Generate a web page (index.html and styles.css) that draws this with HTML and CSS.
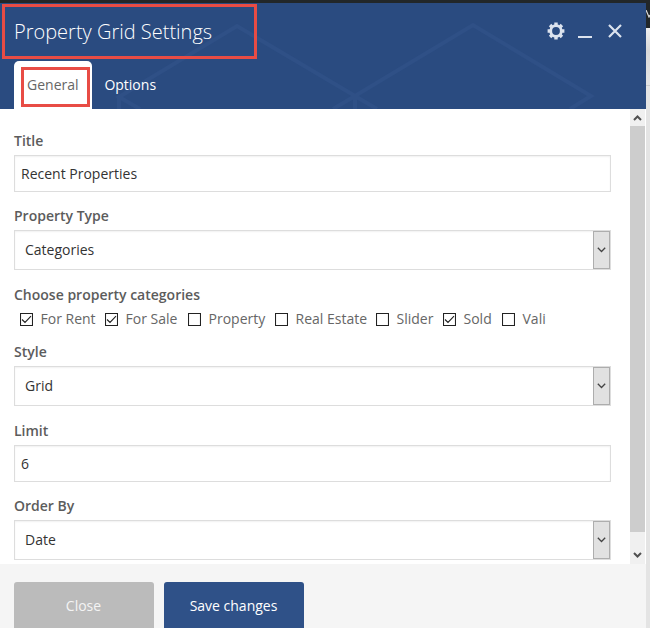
FILE: index.html
```html
<!DOCTYPE html>
<html lang="en">
<head>
<meta charset="utf-8">
<title>Property Grid Settings</title>
<link rel="stylesheet" href="styles.css">
</head>
<body>
<div class="page">
  <div class="modal">
    <header class="header">
      <svg class="pattern" viewBox="0 0 646 106"><path d="M140 106L119 94L237 23L355 93L473 22L591 93L570 106M119 94v12M333 106l22-13l22 13M355 93v13"/></svg>
      <div class="titlebar">
        <h1 class="title">Property Grid Settings</h1>
        <div class="controls">
          <svg class="gear" viewBox="0 0 18 18"><g><path d="M7.3 .6h3.4v3H7.3zM7.3 14.4h3.4v3H7.3zM.6 7.3h3v3.4h-3zM14.4 7.3h3v3.4h-3z"/><path transform="rotate(45 9 9)" d="M7.3 .6h3.4v3H7.3zM7.3 14.4h3.4v3H7.3zM.6 7.3h3v3.4h-3zM14.4 7.3h3v3.4h-3z"/></g><circle cx="9" cy="9" r="5.3"/></svg>
          <svg class="minimize" viewBox="0 0 14 18"><path d="M0 15h14"/></svg>
          <svg class="close" viewBox="0 0 14 14"><path d="M1 1l12 12M13 1L1 13"/></svg>
        </div>
      </div>
      <nav class="tabs">
        <span class="tab active">General</span>
        <span class="tab">Options</span>
      </nav>
      <div class="mark mark-title"></div>
      <div class="mark mark-tab"></div>
    </header>
    <main class="body">
      <form class="form">
        <div class="label">Title</div>
        <div class="input">Recent Properties</div>
        <div class="label">Property Type</div>
        <div class="select"><span>Categories</span><i class="drop"><svg viewBox="0 0 9 6"><path d="M.8 .8L4.5 4.5L8.200 .8"/></svg></i></div>
        <div class="label">Choose property categories</div>
        <div class="checks">
          <span class="check"><svg viewBox="0 0 13 13"><path d="M.5 .5h12v12H.5zM2 6.500l3 3l6-6.300"/></svg>For Rent</span>
          <span class="check"><svg viewBox="0 0 13 13"><path d="M.5 .5h12v12H.5zM2 6.500l3 3l6-6.300"/></svg>For Sale</span>
          <span class="check"><svg viewBox="0 0 13 13"><path d="M.5 .5h12v12H.5z"/></svg>Property</span>
          <span class="check"><svg viewBox="0 0 13 13"><path d="M.5 .5h12v12H.5z"/></svg>Real Estate</span>
          <span class="check"><svg viewBox="0 0 13 13"><path d="M.5 .5h12v12H.5z"/></svg>Slider</span>
          <span class="check"><svg viewBox="0 0 13 13"><path d="M.5 .5h12v12H.5zM2 6.500l3 3l6-6.300"/></svg>Sold</span>
          <span class="check"><svg viewBox="0 0 13 13"><path d="M.5 .5h12v12H.5z"/></svg>Vali</span>
        </div>
        <div class="label">Style</div>
        <div class="select"><span>Grid</span><i class="drop"><svg viewBox="0 0 9 6"><path d="M.8 .8L4.5 4.5L8.200 .8"/></svg></i></div>
        <div class="label">Limit</div>
        <div class="input">6</div>
        <div class="label">Order By</div>
        <div class="select"><span>Date</span><i class="drop"><svg viewBox="0 0 9 6"><path d="M.8 .8L4.5 4.5L8.200 .8"/></svg></i></div>
      </form>
      <div class="scrollbar">
        <svg viewBox="0 0 15 17"><path d="M4 11L7.500 7.500L11 11"/></svg>
        <div class="thumb"></div>
        <svg viewBox="0 0 15 17"><path d="M4 6L7.500 9.500L11 6"/></svg>
      </div>
    </main>
    <footer class="footer">
      <div class="button secondary">Close</div>
      <div class="button primary">Save changes</div>
    </footer>
  </div>
  <div class="backdrop"><svg viewBox="0 0 4 8"><path d="M0 0L3 7L4 5"/></svg></div>
</div>
</body>
</html>
```
FILE: styles.css
```css
* { box-sizing: border-box; }
body {
  margin: 0;
  background: #222729;
  font: 14px/20px "Open Sans", sans-serif;
  color: #333;
}
.page {
  display: grid;
  grid-template-columns: 646px 4px;
  width: 650px;
  height: 628px;
  overflow: hidden;
}
.modal {
  display: flex;
  flex-direction: column;
  margin-top: 3px;
  height: 625px;
  background: #fff;
}
.header {
  position: relative;
  height: 106px;
  flex: none;
  background: #2a4b80;
  color: #fff;
}
.pattern { position: absolute; inset: 0; width: 646px; height: 106px; }
.pattern path { fill: none; stroke: #2f5086; stroke-width: 4; }
.titlebar {
  position: relative;
  display: flex;
  justify-content: space-between;
  height: 58px;
  padding: 0 24px 0 14px;
}
.title { margin: 0; font-size: 20px; line-height: 57px; font-weight: 300; }
.controls { display: flex; padding-top: 19px; }
.controls svg { fill: none; stroke: #dce3ee; stroke-width: 2; }
.gear { width: 18px; height: 18px; margin-right: 13px; }
.controls .gear g { fill: #dce3ee; stroke: none; }
.controls .gear circle { stroke-width: 2.8; }
.minimize { width: 14px; height: 18px; margin-right: 16px; }
.close { width: 14px; height: 14px; margin-top: 2px; }
.controls .close { stroke-width: 2.2; }
.tabs { position: relative; display: flex; padding-left: 14px; }
.tab { height: 48px; padding: 0 12.4px; line-height: 48px; }
.tab.active { width: 78px; padding: 0 13px; background: #fff; color: #666; border-radius: 5px 5px 0 0; }
.mark { position: absolute; border: 3px solid #e84c45; }
.mark-title { left: 2px; top: 1px; width: 255px; height: 55px; }
.mark-tab { left: 21px; top: 64px; width: 69px; height: 40px; }
.body { display: flex; height: 455px; flex: none; overflow: hidden; }
.form { width: 630px; padding: 20px 19px 0 14px; }
.label { height: 26px; line-height: 24px; font-weight: 600; color: #5c5c5c; }
.input, .select {
  border: 1px solid #ddd;
  box-shadow: inset 0 1px 2px rgba(0, 0, 0, .06);
}
.input { height: 37px; margin-bottom: 12px; padding-left: 6px; line-height: 35px; }
.select {
  display: flex;
  justify-content: space-between;
  height: 40px;
  margin-bottom: 13px;
  padding-left: 10px;
  line-height: 38px;
}
.drop {
  display: flex;
  align-items: center;
  justify-content: center;
  width: 17px;
  border: 1px solid #adadad;
  background: #e1e1e1;
}
.drop svg { width: 9px; height: 6px; margin-right: 1px; fill: none; stroke: #444; stroke-width: 1.3; }
.checks {
  display: grid;
  grid-template-columns: 85px 83px 87px 101px 67px 59px 60px;
  height: 31px;
  padding-left: 6px;
  line-height: 20px;
  color: #666;
}
.check { display: flex; align-items: center; height: 20px; white-space: nowrap; }
.check svg { width: 13px; height: 13px; margin: 1px 7.5px 0 0; fill: none; stroke: #222; stroke-width: 1.1; }
.scrollbar { width: 15px; display: flex; flex-direction: column; background: #f0f0f0; }
.scrollbar svg { width: 15px; height: 17px; flex: none; fill: none; stroke: #505050; stroke-width: 2; }
.thumb { height: 406px; flex: none; margin-bottom: 15px; background: #cdcdcd; }
.footer {
  display: flex;
  gap: 10px;
  flex: 1;
  padding: 18px 14px 0;
  background: #f5f5f5;
}
.button {
  width: 140px;
  height: 48px;
  line-height: 48px;
  padding-right: 1px;
  text-align: center;
  border-radius: 3px;
  color: #fff;
}
.secondary { background: #bbb; color: #f4f4f4; }
.primary { background: #2f5188; }
.backdrop {
  padding-top: 10px;
  background: linear-gradient(#222729 28px, #f0f0f0 28px, #d9d9d9 50px, #e5e5e5 85px, #ccc 85px, #ccc 86px, #e4e4e4 86px);
}
.backdrop svg { display: block; width: 4px; height: 8px; fill: none; stroke: #ddd; stroke-width: 1.2; }
```
